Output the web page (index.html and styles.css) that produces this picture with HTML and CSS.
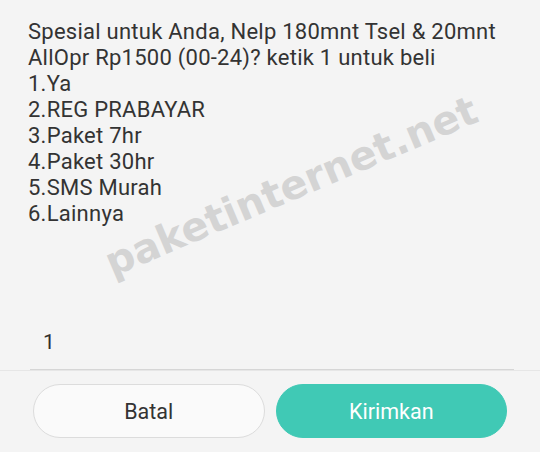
FILE: index.html
```html
<!DOCTYPE html>
<html lang="id">
<head>
<meta charset="utf-8">
<title>USSD</title>
<link rel="stylesheet" href="styles.css">
</head>
<body>
<div class="page">
  <div class="message">
    <p>Spesial untuk Anda, Nelp 180mnt Tsel &amp; 20mnt AllOpr Rp1500 (00-24)? ketik 1 untuk beli</p>
    <p>1.Ya</p>
    <p>2.REG PRABAYAR</p>
    <p>3.Paket 7hr</p>
    <p>4.Paket 30hr</p>
    <p>5.SMS Murah</p>
    <p>6.Lainnya</p>
  </div>
  <div class="input">1</div>
  <div class="footer">
    <button class="btn btn-cancel">Batal</button>
    <button class="btn btn-send">Kirimkan</button>
  </div>
  <span class="watermark">paketinternet.net</span>
</div>
</body>
</html>
```

FILE: styles.css
```css
html, body {
  margin: 0;
  padding: 0;
  background: #f4f4f4;
}

.page {
  position: relative;
  width: 540px;
  height: 452px;
  display: flex;
  flex-direction: column;
  overflow: hidden;
  font-family: Roboto, "Liberation Sans", sans-serif;
  color: #333333;
}

.message {
  flex: 1;
  padding: 19px 20px 0 28px;
  font-size: 22px;
  letter-spacing: 0.25px;
  line-height: 26px;
}

.message p {
  margin: 0;
}

.input {
  margin: 0 26px 0 30px;
  padding: 0 0 14px 13px;
  font-size: 21px;
  line-height: 26px;
  color: #2f2f2f;
  border-bottom: 1px solid #d6d6d6;
}

.footer {
  display: flex;
  gap: 11px;
  padding: 13px 33px 14px 33px;
  border-top: 1px solid #e6e6e6;
}

.btn {
  flex: 1;
  height: 54px;
  border-radius: 27px;
  font-family: Roboto, "Liberation Sans", sans-serif;
  font-size: 21.5px;
  padding: 0;
  cursor: pointer;
}

.btn-cancel {
  background: #fafafa;
  border: 1px solid #dcdcdc;
  color: #333333;
}

.btn-send {
  background: #40c9b5;
  border: 1px solid #40c9b5;
  color: #ffffff;
}

.watermark {
  position: absolute;
  left: 291px;
  top: 186px;
  transform: translate(-50%, -50%) rotate(-23deg);
  font-family: "DejaVu Sans", sans-serif;
  font-weight: bold;
  font-size: 40px;
  line-height: 1;
  color: #d4d4d4;
  white-space: nowrap;
  pointer-events: none;
}
```
